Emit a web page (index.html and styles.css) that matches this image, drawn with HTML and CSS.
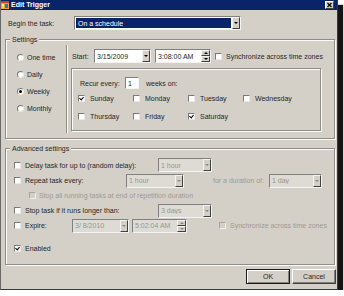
FILE: index.html
```html
<!DOCTYPE html>
<html lang="en">
<head>
  <meta charset="UTF-8" />
  <title>Edit Trigger</title>
  <link rel="stylesheet" href="styles.css">
</head>
<body>
  <div class="window">
    <div class="titlebar">
      <svg class="app-icon" viewBox="0 0 8 8" width="8" height="8">
        <rect x="0" y="0" width="8" height="8" fill="#e8a23a"/>
        <rect x="0" y="0" width="8" height="2" fill="#c8402a"/>
        <rect x="1" y="3" width="2" height="2" fill="#fff2b0"/>
        <rect x="4" y="3" width="3" height="4" fill="#3a6cc8"/>
        <rect x="1" y="5" width="2" height="2" fill="#f6d460"/>
      </svg>
      <span class="title">Edit Trigger</span>
      <span class="close">
        <svg viewBox="0 0 7 6" width="7" height="6"><path d="M1.5 1 L5.5 5 M5.5 1 L1.5 5" stroke="#000" stroke-width="1.2"/></svg>
      </span>
    </div>

    <div class="content">
      <div class="begin-row">
        <span class="begin-label">Begin the task:</span>
        <div class="combo selected begin-combo">
          <span class="combo-text">On a schedule</span>
          <span class="arrow"></span>
        </div>
      </div>

      <div class="group settings">
        <div class="legend">Settings</div>
        <div class="settings-body">
          <div class="freq">
            <div class="opt"><span class="radio"></span>One time</div>
            <div class="opt"><span class="radio"></span>Daily</div>
            <div class="opt"><span class="radio checked"></span>Weekly</div>
            <div class="opt"><span class="radio"></span>Monthly</div>
          </div>
          <div class="vsep"></div>
          <div class="sched">
            <div class="start-row">
              <span class="start-label">Start:</span>
              <div class="combo date"><span class="combo-text">3/15/2009</span><span class="arrow"></span></div>
              <div class="combo time"><span class="combo-text">3:08:00 AM</span><span class="spin"><i class="up"></i><i class="down"></i></span></div>
              <span class="check sync"></span>
              <span class="cb-text">Synchronize across time zones</span>
            </div>
            <div class="recur">
              <div class="recur-row">
                <span class="recur-label">Recur every:</span>
                <span class="field num">1</span>
                <span class="weeks">weeks on:</span>
              </div>
              <div class="days">
                <div class="day"><span class="check on"></span>Sunday</div>
                <div class="day"><span class="check"></span>Monday</div>
                <div class="day"><span class="check"></span>Tuesday</div>
                <div class="day"><span class="check"></span>Wednesday</div>
                <div class="day"><span class="check"></span>Thursday</div>
                <div class="day"><span class="check"></span>Friday</div>
                <div class="day"><span class="check on"></span>Saturday</div>
              </div>
            </div>
          </div>
        </div>
      </div>

      <div class="group advanced">
        <div class="legend">Advanced settings</div>
        <div class="adv-body">
          <div class="arow">
            <div class="cell w144"><span class="check"></span>Delay task for up to (random delay):</div>
            <div class="combo disabled w54"><span class="combo-text">1 hour</span><span class="arrow"></span></div>
          </div>
          <div class="arow">
            <div class="cell w112"><span class="check"></span>Repeat task every:</div>
            <div class="combo disabled w58"><span class="combo-text">1 hour</span><span class="arrow"></span></div>
            <span class="muted duration">for a duration of:</span>
            <div class="combo disabled w53"><span class="combo-text">1 day</span><span class="arrow"></span></div>
          </div>
          <div class="arow indent">
            <div class="cell muted"><span class="check off"></span>Stop all running tasks at end of repetition duration</div>
          </div>
          <div class="arow">
            <div class="cell w144"><span class="check"></span>Stop task if it runs longer than:</div>
            <div class="combo disabled w54"><span class="combo-text">3 days</span><span class="arrow"></span></div>
          </div>
          <div class="arow">
            <div class="cell w58"><span class="check"></span>Expire:</div>
            <div class="combo disabled date"><span class="combo-text">3/ 8/2010</span><span class="arrow"></span></div>
            <div class="combo disabled exp-time"><span class="combo-text">5:02:04 AM</span><span class="spin"><i class="up"></i><i class="down"></i></span></div>
            <div class="cell muted exp-sync"><span class="check off"></span>Synchronize across time zones</div>
          </div>
          <div class="arow enabled">
            <div class="cell"><span class="check on"></span>Enabled</div>
          </div>
        </div>
      </div>

      <div class="buttons">
        <button class="btn default">OK</button>
        <button class="btn">Cancel</button>
      </div>
    </div>
  </div>
</body>
</html>
```

FILE: styles.css
```css
* {
  box-sizing: border-box;
}
body {
  margin: 0;
  background: #fff;
  font-family: "Liberation Sans", Arial, sans-serif;
  font-size: 7px;
  color: #262626;
}
.window {
  width: 338px;
  height: 290px;
  background: #d4d0c8;
  border-left: 1px solid #6a6864;
  border-right: 1px solid #3a3a3a;
  border-bottom: 1px solid #3a3a3a;
  box-shadow: 5px 5px 1px #141414;
}
.titlebar {
  height: 10px;
  background: #0a246a;
  display: flex;
  align-items: center;
  padding: 0 2px 0 0;
  color: #fff;
  font-weight: bold;
}
.app-icon {
  margin-right: 2px;
}
.title {
  flex: 1;
  line-height: 10px;
}
.close {
  width: 9px;
  height: 8px;
  margin-right: 1px;
  background: #d4d0c8;
  border: 1px solid;
  border-color: #fff #404040 #404040 #fff;
  display: flex;
  align-items: center;
  justify-content: center;
}
.content {
  padding: 6px 1px 0 4px;
}

/* rows */
.begin-row {
  display: flex;
  align-items: center;
  height: 14px;
  padding-left: 3px;
}
.begin-label {
  width: 66px;
}
.begin-combo {
  width: 167px;
}

/* sunken fields */
.combo, .field {
  flex: none;
  height: 14px;
  background: #fff;
  border: 1px solid;
  border-color: #808080 #f4f4f4 #f4f4f4 #808080;
  display: flex;
  align-items: center;
}
.combo-text {
  flex: 1;
  min-width: 0;
  padding-left: 2px;
  white-space: nowrap;
  overflow: hidden;
}
.combo.selected .combo-text {
  align-self: stretch;
  display: flex;
  align-items: center;
  margin: 1px;
  background: #0a246a;
  color: #fff;
}
.arrow {
  flex: none;
  width: 8px;
  height: 100%;
  background: #d4d0c8;
  border: 1px solid;
  border-color: #f4f4f4 #404040 #404040 #f4f4f4;
  display: flex;
  align-items: center;
  justify-content: center;
}
.arrow::after {
  content: "";
  border-top: 2px solid #000;
  border-left: 2px solid transparent;
  border-right: 2px solid transparent;
}
.spin {
  flex: none;
  width: 9px;
  height: 100%;
  display: flex;
  flex-direction: column;
}
.spin i {
  flex: 1;
  background: #d4d0c8;
  border: 1px solid;
  border-color: #f4f4f4 #404040 #404040 #f4f4f4;
  display: flex;
  align-items: center;
  justify-content: center;
}
.spin .up::after {
  content: "";
  border-bottom: 2px solid #000;
  border-left: 2px solid transparent;
  border-right: 2px solid transparent;
}
.spin .down::after {
  content: "";
  border-top: 2px solid #000;
  border-left: 2px solid transparent;
  border-right: 2px solid transparent;
}
.combo.disabled {
  background: #dedbd5;
  color: #98958f;
}
.combo.disabled .arrow::after,
.combo.disabled .spin i::after {
  border-top-color: #8a8882;
  border-bottom-color: #8a8882;
}

/* group boxes */
.group {
  width: 330px;
  border: 1px solid #8e8c87;
  box-shadow: inset 1px 1px 0 #fbfbfb, 1px 1px 0 #fbfbfb;
}
.legend {
  width: max-content;
  height: 9px;
  line-height: 9px;
  margin: -5px 0 0 4px;
  padding: 0 2px;
  background: #d4d0c8;
}
.settings {
  height: 100px;
  margin-top: 9px;
}
.settings-body {
  display: flex;
}
.freq {
  width: 60px;
  padding: 5px 0 0 11px;
}
.opt {
  height: 17px;
  display: flex;
  align-items: center;
  gap: 3px;
}
.radio {
  width: 7px;
  height: 7px;
  border-radius: 50%;
  background: #fff;
  border: 1px solid;
  border-color: #7a7a7a #e8e8e8 #e8e8e8 #7a7a7a;
  display: flex;
  align-items: center;
  justify-content: center;
}
.radio.checked::after {
  content: "";
  width: 3px;
  height: 3px;
  border-radius: 50%;
  background: #000;
}
.vsep {
  width: 2px;
  height: 88px;
  margin-top: 1px;
  border-left: 1px solid #8e8c87;
  border-right: 1px solid #fbfbfb;
}
.sched {
  padding: 5px 0 0 4px;
}
.start-row {
  display: flex;
  align-items: center;
  height: 14px;
}
.start-label {
  width: 22px;
}
.date {
  width: 57px;
}
.time {
  width: 56px;
  margin-left: 4px;
}
.sync {
  margin-left: 4px;
}
.cb-text {
  margin-left: 4px;
}

/* checkboxes */
.check {
  flex: none;
  width: 7px;
  height: 7px;
  background: #fff;
  border: 1px solid;
  border-color: #7a7a7a #e8e8e8 #e8e8e8 #7a7a7a;
  position: relative;
}
.check.on::after {
  content: "";
  position: absolute;
  left: 1px;
  top: 0;
  width: 2px;
  height: 3px;
  border-right: 1.2px solid #000;
  border-bottom: 1.2px solid #000;
  transform: rotate(40deg);
}
.check.off {
  background: #d4d0c8;
  border-color: #a8a59f #eeeeee #eeeeee #a8a59f;
}

.recur {
  width: 250px;
  height: 63px;
  margin: 5px 0 0 -1px;
  padding: 8px 0 0 8px;
  border: 1px solid #8e8c87;
  box-shadow: inset 1px 1px 0 #fbfbfb, 1px 1px 0 #fbfbfb;
}
.recur-row {
  display: flex;
  align-items: center;
  height: 12px;
}
.recur-label {
  width: 45px;
}
.field.num {
  width: 14px;
  height: 12px;
  padding-left: 2px;
}
.weeks {
  margin-left: 7px;
}
.days {
  display: grid;
  grid-template-columns: repeat(4, 55px);
  grid-auto-rows: 18px;
  margin-left: -2px;
}
.day {
  display: flex;
  align-items: center;
  gap: 5px;
}

/* advanced */
.advanced {
  height: 117px;
  margin-top: 9px;
}
.adv-body {
  padding: 4px 0 0 8px;
}
.arow {
  display: flex;
  align-items: center;
  height: 15px;
  white-space: nowrap;
}
.arow:first-child {
  height: 16px;
}
.cell {
  flex: none;
  display: flex;
  align-items: center;
  gap: 4px;
}
.w144 { width: 144px; }
.w112 { width: 112px; }
.w58 { width: 58px; }
.w54 { width: 54px; }
.w53 { width: 53px; }
.muted {
  color: #9d9a95;
}
.duration {
  width: 56px;
  margin-left: 29px;
}
.indent {
  padding-left: 15px;
}
.indent .cell {
  gap: 3px;
}
.exp-time {
  width: 55px;
  margin-left: 3px;
}
.exp-sync {
  margin-left: 32px;
}
.enabled {
  margin-top: 8px;
}

/* buttons */
.buttons {
  display: flex;
  justify-content: flex-end;
  gap: 2px;
  margin-top: 4px;
}
.btn {
  width: 44px;
  height: 15px;
  padding: 0;
  font: inherit;
  color: #262626;
  background: #d4d0c8;
  border: 1px solid;
  border-color: #fff #404040 #404040 #fff;
  box-shadow: inset -1px -1px 0 #808080;
}
.btn.default {
  border-color: #1a1a1a;
  box-shadow: inset 1px 1px 0 #fff, inset -1px -1px 0 #808080;
}
```
